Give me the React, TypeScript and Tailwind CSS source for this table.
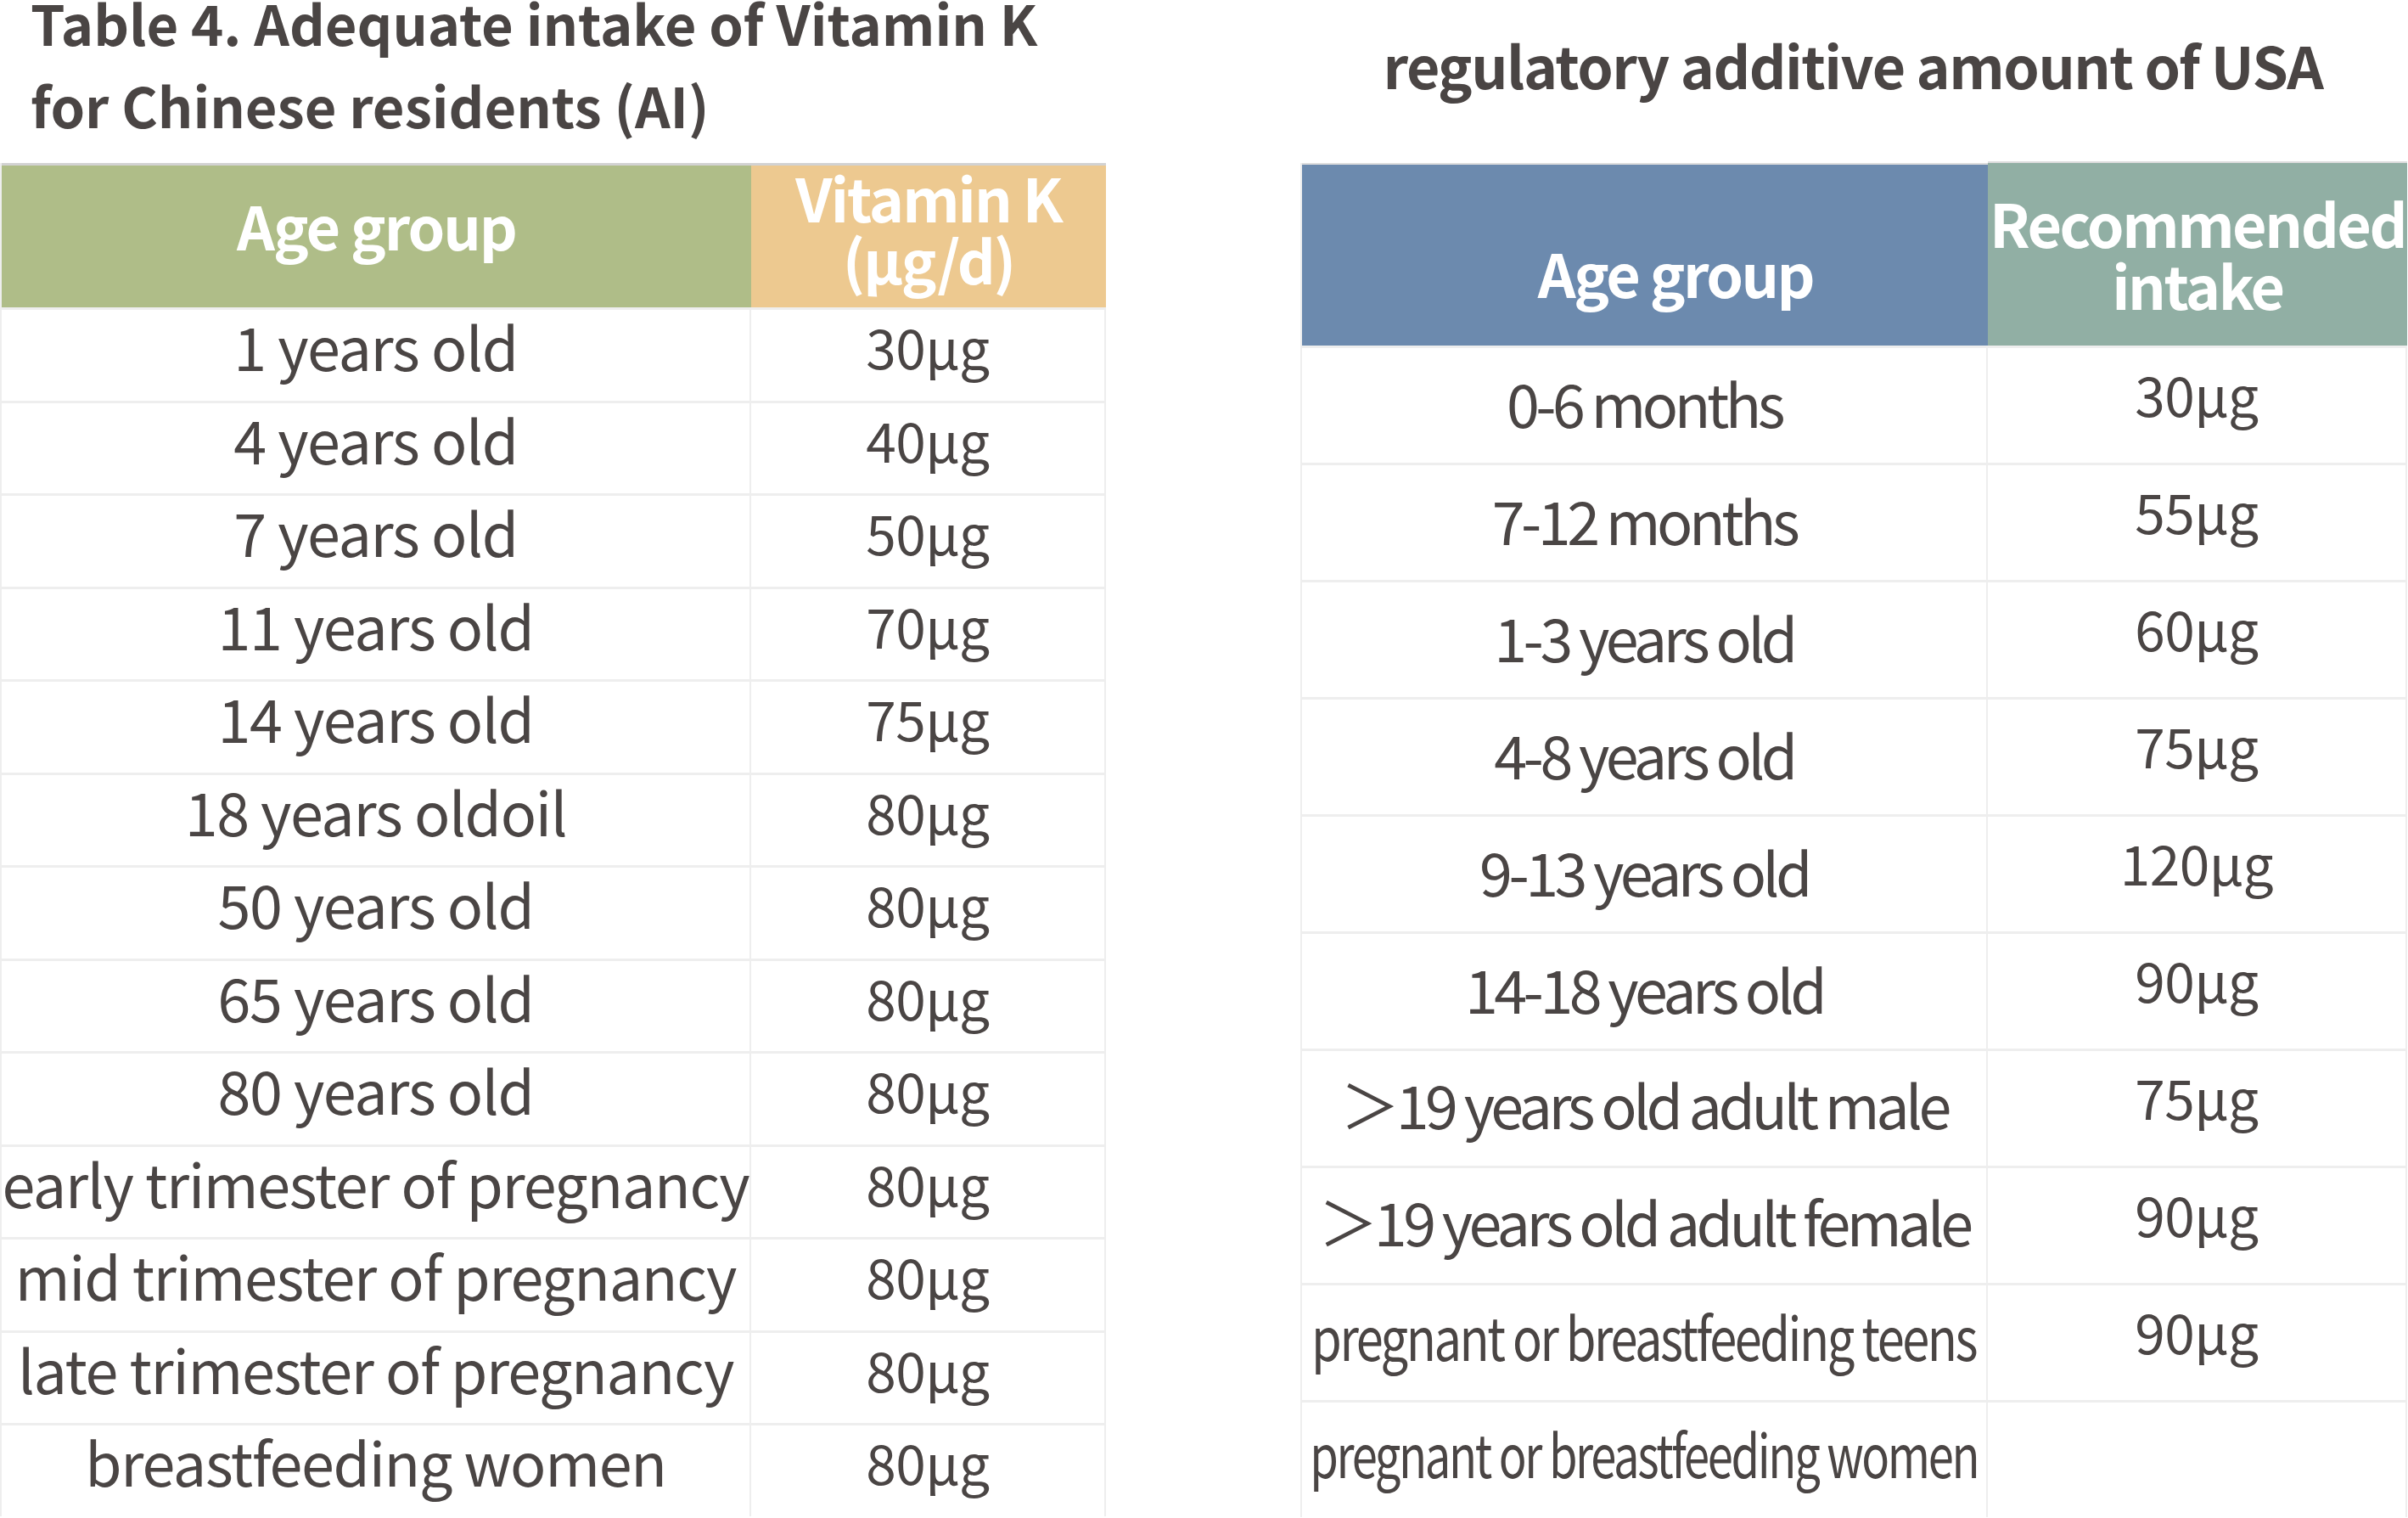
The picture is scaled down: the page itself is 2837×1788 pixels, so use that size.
import React from "react";

const leftRows: [string, string][] = [
  ["1 years old", "30μg"],
  ["4 years old", "40μg"],
  ["7 years old", "50μg"],
  ["11 years old", "70μg"],
  ["14 years old", "75μg"],
  ["18 years oldoil", "80μg"],
  ["50 years old", "80μg"],
  ["65 years old", "80μg"],
  ["80 years old", "80μg"],
  ["early trimester of pregnancy", "80μg"],
  ["mid trimester of pregnancy", "80μg"],
  ["late trimester of pregnancy", "80μg"],
  ["breastfeeding women", "80μg"],
];

const rightRows: { label: string; value: string; track: string; pad: string }[] = [
  { label: "0-6 months", value: "30μg", track: "tracking-[-4.5px]", pad: "pb-[8px]" },
  { label: "7-12 months", value: "55μg", track: "tracking-[-4.5px]", pad: "pb-[8px]" },
  { label: "1-3 years old", value: "60μg", track: "tracking-[-4.5px]", pad: "pb-[8px]" },
  { label: "4-8 years old", value: "75μg", track: "tracking-[-4.5px]", pad: "pb-[8px]" },
  { label: "9-13 years old", value: "120μg", track: "tracking-[-4.5px]", pad: "pb-[8px]" },
  { label: "14-18 years old", value: "90μg", track: "tracking-[-4.5px]", pad: "pb-[8px]" },
  { label: "＞19 years old adult male", value: "75μg", track: "tracking-[-4.5px]", pad: "pb-[12px]" },
  { label: "＞19 years old adult female", value: "90μg", track: "tracking-[-4.5px]", pad: "pb-[12px]" },
  { label: "pregnant or breastfeeding teens", value: "90μg", track: "tracking-[-3px] scale-x-[0.825]", pad: "pb-[18px]" },
  { label: "pregnant or breastfeeding women", value: "", track: "tracking-[-3px] scale-x-[0.775]", pad: "pb-[18px]" },
];

export default function App() {
  return (
    <div className="w-[2837px] h-[1788px] bg-white overflow-hidden flex font-['Noto_Sans_CJK_SC',sans-serif] text-[#4a4544]">
      {/* Left block */}
      <div className="w-[1301px] flex flex-col">
        <div className="h-[192px] pl-[36px]">
          <div className="-mt-[22px] font-bold text-[65px] leading-[97px]">
            <div>Table 4. Adequate intake of Vitamin K</div>
            <div>for Chinese residents (AI)</div>
          </div>
        </div>
        <div className="grid grid-cols-[883px_418px] border-l-2 border-[#eeeeee]">
          <div className="h-[170px] bg-[#afbd88] border-t-[3px] border-[#d2d2d2] flex items-center justify-center text-white font-bold text-[70px] tracking-[-2px] leading-none pb-[28px]">
            Age group
          </div>
          <div className="h-[170px] bg-[#edc990] border-t-[3px] border-[#d2d2d2] flex flex-col items-center justify-center text-white font-bold text-[70px] tracking-[-2px] leading-[73px] pb-[22px]">
            <span>Vitamin K</span>
            <span>(μg/d)</span>
          </div>
          {leftRows.map(([a, v], i) => (
            <React.Fragment key={i}>
              <div className="h-[109.5px] border-t-[3px] border-r-2 border-[#eeeeee] flex items-center justify-center text-[70px] tracking-[-1.3px] leading-none whitespace-nowrap pb-[22px]">
                {a}
              </div>
              <div className="h-[109.5px] border-t-[3px] border-r-2 border-[#eeeeee] flex items-center justify-center text-[64px] tracking-[-0.5px] leading-none pb-[22px]">
                {v}
              </div>
            </React.Fragment>
          ))}
        </div>
      </div>

      {/* Right block */}
      <div className="ml-[231px] w-[1302px] flex flex-col">
        <div className="h-[192px] flex justify-center font-bold text-[68px] tracking-[-1.5px] leading-none pt-[42px]">
          regulatory additive amount of USA
        </div>
        <div className="grid grid-cols-[808px_494px] border-l-2 border-[#eeeeee]">
          <div className="h-[215px] bg-[#6c8aae] border-t-2 border-[#dddddd] flex items-end justify-center text-white font-bold text-[70px] tracking-[-2.5px] leading-none pb-[51px] pl-[72px]">
            Age group
          </div>
          <div className="h-[217px] -mt-[2px] bg-[#91afa4] border-t-2 border-[#dddddd] flex flex-col items-center justify-center text-white font-bold text-[70px] tracking-[-2.5px] leading-[73px] pb-[4px]">
            <span>Recommended</span>
            <span>intake</span>
          </div>
          {rightRows.map((r, i) => (
            <React.Fragment key={i}>
              <div className={"h-[138px] border-t-[3px] border-r-2 border-[#eeeeee] flex items-center justify-center text-[70px] leading-none whitespace-nowrap " + r.pad}>
                <span className={"inline-block " + r.track}>{r.label}</span>
              </div>
              <div className="h-[138px] border-t-[3px] border-r-2 border-[#eeeeee] flex items-center justify-center text-[64px] tracking-[-0.5px] leading-none pb-[30px]">
                {r.value}
              </div>
            </React.Fragment>
          ))}
        </div>
      </div>
    </div>
  );
}
